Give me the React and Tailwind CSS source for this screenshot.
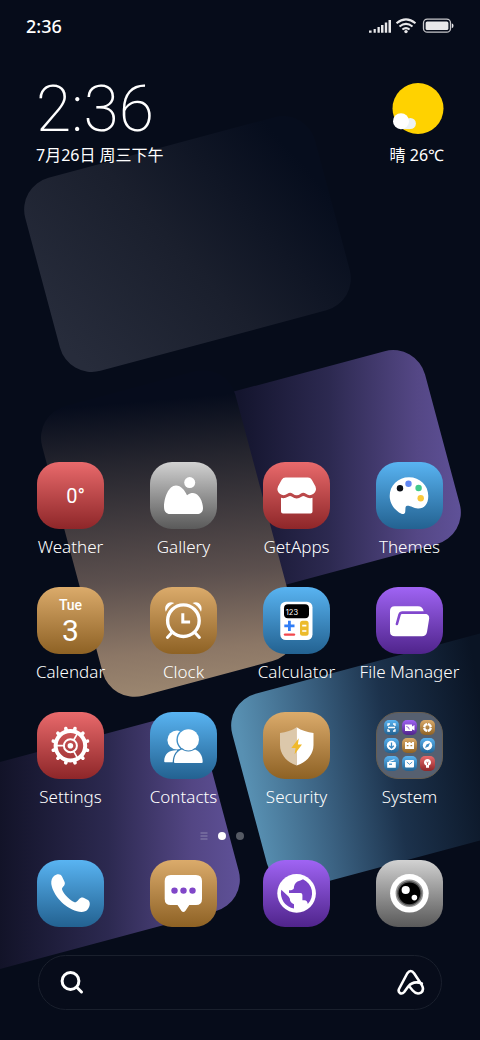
import { useState } from 'react';
import clsx from 'clsx';

const tints = {
    red: 'bg-linear-to-b from-[#e96a6c] to-[#8e2629]',
    gray: 'bg-linear-to-b from-[#d2d2d2] to-[#5a5a5a]',
    blue: 'bg-linear-to-b from-[#59b4f2] to-[#236291]',
    gold: 'bg-linear-to-b from-[#dbab6b] to-[#8e6224]',
    purple: 'bg-linear-to-b from-[#a064f4] to-[#50248c]',
    folder: 'bg-[#566070] border border-[#665d50]',
};

function Glyph({ children }) {
    return (
        <svg viewBox="0 0 67 67" className="size-full" fill="#fff" aria-hidden="true">
            {children}
        </svg>
    );
}

function WeatherIcon() {
    return (
        <span className="flex size-full items-center justify-center pl-2.5 font-[Roboto,sans-serif] text-xl text-white">
            0°
        </span>
    );
}

function CalendarIcon() {
    return (
        <span className="flex size-full flex-col items-center pt-2 font-[Roboto,sans-serif] text-white">
            <span className="text-sm leading-5 font-medium">Tue</span>
            <span className="text-3xl leading-8">3</span>
        </span>
    );
}

function GalleryIcon() {
    return (
        <Glyph>
            <circle cx="39.7" cy="20.6" r="5.5" />
            <path d="M14 45C14 36 18.500 23.500 26 23.500C31 23.500 34.500 28 37 33.200C39 31.600 41 31 43 31C49 31 53 40 53 46C53 50 50.500 52 47 52H20C16 52 14 49 14 45Z" />
        </Glyph>
    );
}

function GetAppsIcon() {
    return (
        <Glyph>
            <path d="M18 35.800Q21.500 36.800 25 34.800Q27 33 29 34.800Q33.700 38 38.400 34.800Q40.400 33 42.400 34.800Q46 36.800 49.500 35.800V49.500Q49.500 51.500 47.500 51.500H20Q18 51.500 18 49.500Z" />
            <path d="M22.500 15.500H45Q47.500 15.500 48.800 17.800L52.500 24.500Q54 29 50.500 31.800Q46.500 34.500 43 31.800Q40.300 29.600 37.600 31.800Q33.700 34.800 29.800 31.800Q27.100 29.600 24.400 31.800Q20.500 34.500 16.800 31.800Q13.300 29 15 24.500L18.700 17.800Q20 15.500 22.500 15.500Z" />
        </Glyph>
    );
}

function ThemesIcon() {
    return (
        <Glyph>
            <path d="M33 15.300C44 15.300 52.300 23.500 52.300 34C52.300 42.500 48 46.700 42 46.500C37 46.300 35 43.500 31 43.800C29 44 29.600 47 29.200 50C28.900 52.300 26.500 52.500 25 51.500C18 48 13.700 41 13.700 34C13.700 23.500 22 15.300 33 15.300Z" />
            <circle cx="24" cy="26.300" r="3.200" fill="#0b0f16" />
            <circle cx="32.500" cy="21.700" r="3.200" fill="#6187f3" />
            <circle cx="42.600" cy="26" r="3.200" fill="#41c98c" />
            <circle cx="44.700" cy="36.300" r="3.200" fill="#fbc83a" />
        </Glyph>
    );
}

function ClockIcon() {
    return (
        <Glyph>
            <circle cx="33.400" cy="33.700" r="15.800" fill="none" stroke="#fff" strokeWidth="3.400" />
            <path d="M15.800 24.700C13.300 18.500 18.500 13 24.300 16C20.500 17.800 17.500 20.800 15.800 24.700Z" />
            <path d="M51 24.700C53.500 18.500 48.300 13 42.500 16C46.300 17.800 49.300 20.800 51 24.700Z" />
            <g fill="none" stroke="#fff">
                <path d="M32.800 27.800V35H38.600" strokeWidth="3" strokeLinecap="square" />
                <path d="M21.500 46L17.400 50.500M45.300 46L49.400 50.500" strokeWidth="3" strokeLinecap="round" />
            </g>
        </Glyph>
    );
}

function CalculatorIcon() {
    return (
        <Glyph>
            <rect x="17.300" y="14.700" width="32.200" height="38.300" rx="5.500" />
            <rect x="21" y="17.300" width="25" height="14" rx="4" fill="#000" />
            <text x="22.800" y="28.400" fontSize="7.500" fontFamily="Inter, sans-serif">
                123
            </text>
            <path d="M26.400 33.800V44M21.300 38.900H31.500" stroke="#2f7df6" strokeWidth="2.800" />
            <path d="M22 47.600H31" stroke="#f2474c" strokeWidth="2.400" strokeLinecap="round" />
            <rect x="37" y="33.800" width="8.600" height="15" rx="2.500" fill="#ecbb2c" />
            <path d="M39.200 38.600H43.400M39.200 44H43.400" stroke="#fff" strokeWidth="1.600" />
        </Glyph>
    );
}

function FilesIcon() {
    return (
        <Glyph>
            <path d="M14 24Q14 19.300 18.700 19.300H42Q46.600 19.300 47.600 24L48 26.800Q53.600 27 53.200 31.500L51 45Q50 49.300 46 49.300H19Q14 49.300 14 44.500Z" />
            <path
                d="M20.900 37L23.600 27.300Q24.100 25.600 26 25.600H49.500"
                fill="none"
                stroke="#8147cd"
                strokeWidth="2.600"
                strokeLinecap="round"
            />
        </Glyph>
    );
}

function SettingsIcon() {
    return (
        <Glyph>
            <g fill="none" stroke="#fff">
                <circle cx="33.400" cy="33.700" r="14.800" strokeWidth="4" />
                <circle cx="33.400" cy="33.700" r="6.500" strokeWidth="2" />
                {[0, 120, 240].map((deg) => (
                    <path key={deg} d="M26.500 33.700H20" strokeWidth="1.700" transform={`rotate(${deg} 33.4 33.7)`} />
                ))}
                {Array.from({ length: 12 }, (_, i) => (
                    <path
                        key={i}
                        d="M33.400 18V16"
                        strokeWidth="3.600"
                        strokeLinecap="round"
                        transform={`rotate(${15 + i * 30} 33.4 33.7)`}
                    />
                ))}
            </g>
            <circle cx="33.400" cy="33.700" r="2.800" />
        </Glyph>
    );
}

function ContactsIcon() {
    return (
        <Glyph>
            <mask id="contactBack" maskUnits="userSpaceOnUse" x="0" y="0" width="67" height="67">
                <rect width="67" height="67" fill="#fff" />
                <circle cx="38.400" cy="27.800" r="12" fill="#000" />
                <path d="M22.600 52C22.600 43 26 37 33.200 36H44V52Z" fill="#000" />
            </mask>
            <mask id="contactFront" maskUnits="userSpaceOnUse" x="0" y="0" width="67" height="67">
                <rect width="67" height="67" fill="#fff" />
                <circle cx="38.400" cy="27.800" r="11.700" fill="#000" />
            </mask>
            <g mask="url(#contactBack)">
                <circle cx="27" cy="28" r="9.600" />
                <path d="M14.200 49C14.500 42 19 38 27 38.300V50.300H15.200Q14 50.300 14.200 49Z" />
            </g>
            <path
                d="M24 50C24 43 27.500 38.500 33.200 37H43.600C49.500 38.500 52.700 43.500 52.700 50Q52.700 51 51.700 51H25Q24 51 24 50Z"
                mask="url(#contactFront)"
            />
            <circle cx="38.400" cy="27.800" r="10.600" />
        </Glyph>
    );
}

function SecurityIcon() {
    return (
        <Glyph>
            <path
                d="M33.700 15.200C29 18.800 23 20 17 21V33C17 43 24.500 50.500 33.700 53.500Z"
                fill="#dcc8ab"
            />
            <path d="M33.700 15.200C38.500 18.800 44.500 20 50.500 21V33C50.500 43 43 50.500 33.700 53.500Z" />
            <path d="M35.800 26.300L28.300 36H32.600L31.600 42.300L39 32.600H34.900Z" fill="#f0b92b" />
        </Glyph>
    );
}

function PhoneIcon() {
    return (
        <Glyph>
            <path d="M17 16C20 13.500 23.500 13.500 25 16.500L27.600 22C28.700 25 26 26.500 25 28.500C24.500 31 31 39.500 37.500 42.200C39.800 43 41 39.500 43.500 38C45.500 37 47 38 48.500 38.700L51 40C53.500 41.700 53.300 46 51 49C48.500 52.500 44 52.500 40 51.300C27 47.500 16 35 14.300 24C14 20.500 15 17.500 17 16Z" />
        </Glyph>
    );
}

function MessagesIcon() {
    return (
        <Glyph>
            <path d="M20.700 15H46Q52 15 52 21V39Q52 45 46 45H39.300L35.300 51Q33.400 53.200 31.500 51L27.500 45H20.700Q14.700 45 14.700 39V21Q14.700 15 20.700 15Z" />
            <g fill="#8046c8">
                <circle cx="24.500" cy="30.600" r="3.200" />
                <circle cx="33.500" cy="30.600" r="3.200" />
                <circle cx="42.500" cy="30.600" r="3.200" />
            </g>
        </Glyph>
    );
}

function BrowserIcon() {
    return (
        <Glyph>
            <circle cx="33.600" cy="33.400" r="19.300" />
            <g fill="#7a43c8">
                <path d="M40 19.200Q37.500 20.800 34.500 21.500Q31 23.500 30.800 28.500Q30 30.400 26 30.300V33H37.500Q39.400 33 39.400 35V40.300H41.500Q44.300 40.500 44.800 44A15.500 15.500 0 0 0 40 19.200Z" />
                <path d="M18.300 29.800L25.500 36.500Q27.200 38 27.200 41Q28.500 43.500 31 44.200V48.500A15.500 15.500 0 0 1 18.300 29.800Z" />
            </g>
        </Glyph>
    );
}

function CameraIcon() {
    return (
        <Glyph>
            <circle cx="33.400" cy="33.300" r="19.300" />
            <circle cx="33.400" cy="33.300" r="13.800" fill="#959595" />
            <circle cx="33.400" cy="33.300" r="12.300" fill="#555" />
            <circle cx="33.400" cy="33.300" r="10.900" fill="#000" />
            <circle cx="29.700" cy="30" r="4.100" />
            <circle cx="38.400" cy="37.600" r="2.800" />
        </Glyph>
    );
}

const folderItems = [
    {
        tint: 'blue',
        art: <path d="M4 6V4H6M9 4H11V6M11 9V11H9M6 11H4V9M4 7.500H11" fill="none" stroke="#fff" strokeWidth="1.300" />,
    },
    {
        tint: 'purple',
        art: (
            <>
                <path d="M3 4.500H10V6.500L12.500 5V10.500L10 9.300V11H3Z" />
                <path d="M4.300 6.500Q7 6.700 7.300 9.500" fill="none" stroke="#7a43c8" strokeWidth="0.800" />
            </>
        ),
    },
    {
        tint: 'gold',
        art: (
            <>
                <circle cx="7.500" cy="7.500" r="3.300" fill="none" stroke="#fff" strokeWidth="2.300" />
                <path d="M7.500 3V4.500M7.500 10.500V12M3 7.500H4.500M10.500 7.500H12" stroke="#c09050" strokeWidth="1" />
            </>
        ),
    },
    {
        tint: 'blue',
        art: (
            <>
                <circle cx="7.500" cy="7.500" r="4.700" />
                <path d="M7.500 4.500V10M5.200 7.800L7.500 10L9.800 7.800" fill="none" stroke="#3d8cc5" strokeWidth="1.300" />
            </>
        ),
    },
    {
        tint: 'gold',
        art: (
            <>
                <path d="M3 4H5V5H6.500V4H8.500V5H10V4H12V11H3Z" />
                <path d="M4.800 7.600H6.500M8.500 7.600H10.200" stroke="#b5853f" strokeWidth="1.200" />
            </>
        ),
    },
    {
        tint: 'blue',
        art: (
            <>
                <circle cx="7.500" cy="7.500" r="4.700" />
                <path d="M10 5L8.500 8.500L5 10L6.500 6.500Z" fill="#3d8cc5" />
            </>
        ),
    },
    {
        tint: 'blue',
        art: (
            <>
                <path d="M3.200 6H11.800V11.800H3.200ZM4.500 5L10.500 3.200V4.200L5.500 6Z" />
                <path d="M5 8.200H8" stroke="#3d8cc5" strokeWidth="1.300" />
            </>
        ),
    },
    {
        tint: 'blue',
        art: (
            <>
                <rect x="3" y="4" width="9" height="7.500" rx="1" />
                <path d="M4.800 6L7.500 8.300L10.200 6" fill="none" stroke="#3d8cc5" strokeWidth="0.900" />
            </>
        ),
    },
    {
        tint: 'red',
        art: (
            <>
                <path d="M7.500 3C5.500 3 4 4.500 4 6.400C4 8 5 8.800 6 9.500V11.800H9V9.500C10 8.800 11 8 11 6.400C11 4.500 9.500 3 7.500 3Z" />
                <path d="M7.500 9V6.500M6.300 6L7.500 7L8.700 6" fill="none" stroke="#c14b4c" strokeWidth="0.800" />
            </>
        ),
    },
];

function SystemFolder() {
    return (
        <span className="grid size-full grid-cols-3 place-content-center gap-[3px] p-[7px]">
            {folderItems.map((item, i) => (
                <span key={i} className={clsx('size-[15px] rounded-[5px]', tints[item.tint])}>
                    <svg viewBox="0 0 15 15" className="size-full" fill="#fff" aria-hidden="true">
                        {item.art}
                    </svg>
                </span>
            ))}
        </span>
    );
}

const apps = [
    { name: 'Weather', tint: 'red', Icon: WeatherIcon },
    { name: 'Gallery', tint: 'gray', Icon: GalleryIcon },
    { name: 'GetApps', tint: 'red', Icon: GetAppsIcon },
    { name: 'Themes', tint: 'blue', Icon: ThemesIcon },
    { name: 'Calendar', tint: 'gold', Icon: CalendarIcon },
    { name: 'Clock', tint: 'gold', Icon: ClockIcon },
    { name: 'Calculator', tint: 'blue', Icon: CalculatorIcon },
    { name: 'File Manager', tint: 'purple', Icon: FilesIcon },
    { name: 'Settings', tint: 'red', Icon: SettingsIcon },
    { name: 'Contacts', tint: 'blue', Icon: ContactsIcon },
    { name: 'Security', tint: 'gold', Icon: SecurityIcon },
    { name: 'System', tint: 'folder', Icon: SystemFolder },
];

const dock = [
    { name: 'Phone', tint: 'blue', Icon: PhoneIcon },
    { name: 'Messages', tint: 'gold', Icon: MessagesIcon },
    { name: 'Browser', tint: 'purple', Icon: BrowserIcon },
    { name: 'Camera', tint: 'gray', Icon: CameraIcon },
];

function AppButton({ name, tint, Icon, showLabel }) {
    return (
        <button type="button" aria-label={name} className="flex flex-col items-center gap-1.5">
            <span className={clsx('block size-[67px] overflow-hidden rounded-[22px]', tints[tint])}>
                <Icon />
            </span>
            {showLabel && <span className="text-[17px] leading-6 font-light whitespace-nowrap">{name}</span>}
        </button>
    );
}

// The gradients run in page space, so the tilt is baked into the outline
function Card({ cx, cy, w, h, paint }) {
    const r = 33;
    const a = (-15 * Math.PI) / 180;
    const pt = (x, y) => `${cx + x * Math.cos(a) - y * Math.sin(a)} ${cy + x * Math.sin(a) + y * Math.cos(a)}`;
    const x = w / 2;
    const y = h / 2;
    const arc = `A${r} ${r} 0 0 1 `;
    const d = [
        `M${pt(-x + r, -y)}L${pt(x - r, -y)}`,
        `${arc}${pt(x, -y + r)}L${pt(x, y - r)}`,
        `${arc}${pt(x - r, y)}L${pt(-x + r, y)}`,
        `${arc}${pt(-x, y - r)}L${pt(-x, -y + r)}`,
        `${arc}${pt(-x + r, -y)}Z`,
    ].join('');
    return <path d={d} fill={`url(#${paint})`} />;
}

function Wallpaper() {
    return (
        <svg
            viewBox="0 0 480 1040"
            preserveAspectRatio="xMidYMid slice"
            className="absolute inset-0 size-full"
            aria-hidden="true"
        >
            <defs>
                <linearGradient id="slate" gradientUnits="userSpaceOnUse" x1="70" y1="350" x2="290" y2="150">
                    <stop offset="0" stopColor="#272c3b" />
                    <stop offset="0.5" stopColor="#1a1f2d" />
                    <stop offset="1" stopColor="#060d1d" />
                </linearGradient>
                <linearGradient id="violetTop" gradientUnits="userSpaceOnUse" x1="240" y1="0" x2="461" y2="0">
                    <stop offset="0" stopColor="#14152e" />
                    <stop offset="0.4" stopColor="#2c2950" />
                    <stop offset="0.8" stopColor="#544785" />
                    <stop offset="1" stopColor="#5f5198" />
                </linearGradient>
                <linearGradient id="sand" gradientUnits="userSpaceOnUse" x1="135" y1="402" x2="160" y2="697">
                    <stop offset="0" stopColor="#060c1c" />
                    <stop offset="0.2" stopColor="#25252e" />
                    <stop offset="0.6" stopColor="#5c504e" />
                    <stop offset="0.85" stopColor="#8c7766" />
                    <stop offset="1" stopColor="#9c8770" />
                </linearGradient>
                <linearGradient id="violetBottom" gradientUnits="userSpaceOnUse" x1="0" y1="0" x2="240" y2="0">
                    <stop offset="0" stopColor="#121328" />
                    <stop offset="0.45" stopColor="#2c2950" />
                    <stop offset="0.8" stopColor="#534684" />
                    <stop offset="1" stopColor="#5f5198" />
                </linearGradient>
                <linearGradient id="ocean" gradientUnits="userSpaceOnUse" x1="240" y1="740" x2="480" y2="700">
                    <stop offset="0" stopColor="#5890b2" />
                    <stop offset="0.3" stopColor="#3b6282" />
                    <stop offset="0.6" stopColor="#1c324c" />
                    <stop offset="1" stopColor="#0a1424" />
                </linearGradient>
            </defs>
            <Card cx={187.5} cy={244} w={300} h={200} paint="slate" />
            <Card cx={297.5} cy={478} w={300} h={200} paint="violetTop" />
            <Card cx={169} cy={533.5} w={200} h={300} paint="sand" />
            <Card cx={76.5} cy={845} w={300} h={200} paint="violetBottom" />
            <Card cx={394.5} cy={760} w={300} h={200} paint="ocean" />
        </svg>
    );
}

function StatusBar() {
    return (
        <div className="flex h-[52px] items-center justify-between px-[26px]">
            <span className="text-lg leading-6 font-medium">2:36</span>
            <svg width="85" height="18" viewBox="0 0 85 18" fill="#e8e8ea" aria-hidden="true">
                <path d="M0 13.500H2.600V15.800H0ZM4.600 12H6.800V15.800H4.600ZM8.500 10H10.800V15.800H8.500ZM12 8H14.500V15.800H12ZM15.800 5.500H18.200V15.800H15.800ZM19.500 3H22V15.800H19.500Z" />
                <g fill="none" stroke="#e8e8ea" strokeWidth="2">
                    <path d="M27.500 6.200Q37 -1.500 46.500 6.200" />
                    <path d="M30.500 9.600Q37 4.200 43.500 9.600" />
                    <path d="M33.400 12.600Q37 9.600 40.600 12.600" />
                </g>
                <circle cx="37" cy="14.600" r="1.700" />
                <rect x="54.500" y="2.200" width="27" height="13" rx="3.800" fill="none" stroke="#c8c8cc" strokeWidth="1.300" />
                <rect x="56.600" y="4.400" width="22.800" height="8.600" rx="1.500" />
                <path d="M82.800 6.500Q84.500 6.500 84.500 8.700Q84.500 11 82.800 11Z" />
            </svg>
        </div>
    );
}

function ClockWidget() {
    return (
        <div className="flex items-start justify-between px-9 pt-[30px]">
            <div>
                <div className="font-[Roboto,sans-serif] text-[64px] leading-[56px] font-extralight">2:36</div>
                <div className="mt-[5px] text-base leading-6">7月26日 周三下午</div>
            </div>
            <div className="flex flex-col items-end">
                <svg width="52" height="52" viewBox="0 0 52 52" aria-hidden="true">
                    <circle cx="26" cy="26.500" r="25.500" fill="#ffd200" />
                    <circle cx="18.300" cy="41.500" r="5.600" fill="#edf3f6" />
                    <path d="M8 40H18V47.100H8Z" fill="#edf3f6" />
                    <circle cx="9" cy="39.200" r="8" fill="#fff" />
                </svg>
                <div className="mt-[9px] text-base leading-6">晴 26℃</div>
            </div>
        </div>
    );
}

function PageDots() {
    return (
        <div className="mt-[23px] flex h-2 items-center justify-center gap-2.5 pr-9">
            <svg width="8" height="8" viewBox="0 0 8 8" stroke="#8c86ae" aria-hidden="true">
                <path d="M0.500 1H7.500M0.500 4H7.500M0.500 7H7.500" />
            </svg>
            <span className="size-2 rounded-full bg-white" />
            <span className="size-2 rounded-full bg-[#555a64]" />
        </div>
    );
}

function SearchBar() {
    const [query, setQuery] = useState('');

    return (
        <form
            onSubmit={(e) => e.preventDefault()}
            className="mx-[38px] mt-7 flex h-[55px] items-center rounded-full border border-[#1a202d] bg-[#070c1a] pr-4 pl-5"
        >
            <label htmlFor="search" aria-label="Search">
                <svg width="26" height="26" viewBox="0 0 26 26" fill="none" stroke="#fff" strokeWidth="3" strokeLinecap="round">
                    <circle cx="11.500" cy="11" r="8.400" />
                    <path d="M18 17.500L22.500 22" />
                </svg>
            </label>
            <input
                id="search"
                type="text"
                value={query}
                onChange={(e) => setQuery(e.target.value)}
                className="mx-3 min-w-0 flex-1 bg-transparent text-base outline-none"
            />
            <button type="button" aria-label="Assistant">
                <svg width="28" height="28" viewBox="0 0 28 28" fill="none" stroke="#fff" strokeWidth="2.600" strokeLinecap="round" strokeLinejoin="round">
                    <path d="M24.800 14.500C19.500 12.500 14.500 13.500 11.200 17.500L7.200 23Q5.200 25.300 2.900 24Q0.900 22.500 2 20L10.200 4.500Q13.700 -0.500 17.200 4.500L24.800 16Q27.500 21 24 23.700Q19.500 26 15.700 21.500L12.800 18" />
                </svg>
            </button>
        </form>
    );
}

export default function App() {
    return (
        <div className="relative min-h-screen overflow-hidden bg-[#060c1a] font-['Noto_Sans','Noto_Sans_CJK_SC',sans-serif] text-white">
            <Wallpaper />
            <div className="relative flex min-h-screen flex-col pb-[30px]">
                <StatusBar />
                <ClockWidget />
                <main className="mt-auto grid grid-cols-4 gap-y-7 px-3.5 pt-10">
                    {apps.map((app) => (
                        <AppButton key={app.name} {...app} showLabel />
                    ))}
                </main>
                <PageDots />
                <nav className="mt-5 grid grid-cols-4 px-3.5">
                    {dock.map((app) => (
                        <AppButton key={app.name} {...app} />
                    ))}
                </nav>
                <SearchBar />
            </div>
        </div>
    );
}
